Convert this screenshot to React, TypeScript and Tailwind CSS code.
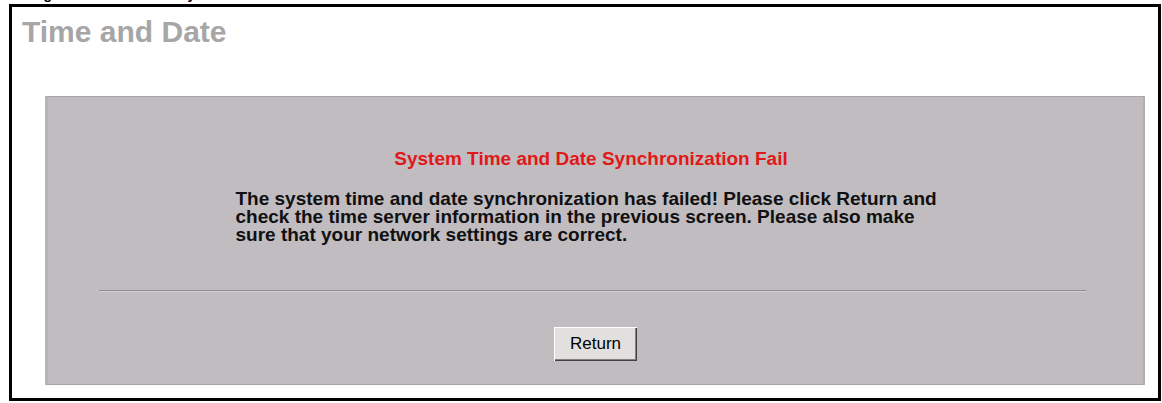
export default function App() {
  return (
    <div className="w-[1162px] h-[403px] bg-white overflow-hidden font-['Liberation_Sans',Arial,sans-serif]">
      {/* caption of the figure above, only descenders visible */}
      <div className="flex h-[16px] mt-[-14px] text-[14px] leading-[16px] font-bold text-black whitespace-nowrap">
        <span className="ml-[31px]">Figure 67</span>
        <span className="ml-[85px]">Synchronization Fail</span>
      </div>

      <div className="ml-[9px] mt-[2px] w-[1152px] h-[397px] border-[3px] border-black bg-white flex flex-col">
        <h1 className="ml-[10px] mt-[8px] text-[30px] leading-[34px] font-bold text-[#a6a6a6]">
          Time and Date
        </h1>

        <div className="ml-[33px] mt-[47px] w-[1100px] h-[289px] bg-[#c0bcc0] border-t border-t-[#a8a6a8] border-l-[3px] border-l-[#b6b4b8] border-r-2 border-r-[#b0aeb0] border-b border-b-[#a8a6a8] flex flex-col items-center">
          <h2 className="mt-[51px] ml-[-9px] text-[19px] leading-[22px] font-bold text-[#e01818]">
            System Time and Date Synchronization Fail
          </h2>

          <p className="mt-[20px] w-[712px] ml-[-8px] text-[19px] leading-[18px] font-bold text-[#101010] whitespace-nowrap">
            The system time and date synchronization has failed! Please click Return and
            <br />
            check the time server information in the previous screen. Please also make
            <br />
            sure that your network settings are correct.
          </p>

          <div className="mt-[46px] w-[987px] ml-[-6px] h-[2px] border-t border-t-[#8e8c90] border-b border-b-[#d0ced2]" />

          <button className="mt-[35px] w-[83px] h-[34px] bg-[#e2e0de] text-[17px] text-black shadow-[inset_1px_1px_#ffffff,inset_-1px_-1px_#404040,inset_-2px_-2px_#808080]">
            Return
          </button>
        </div>
      </div>
    </div>
  );
}
